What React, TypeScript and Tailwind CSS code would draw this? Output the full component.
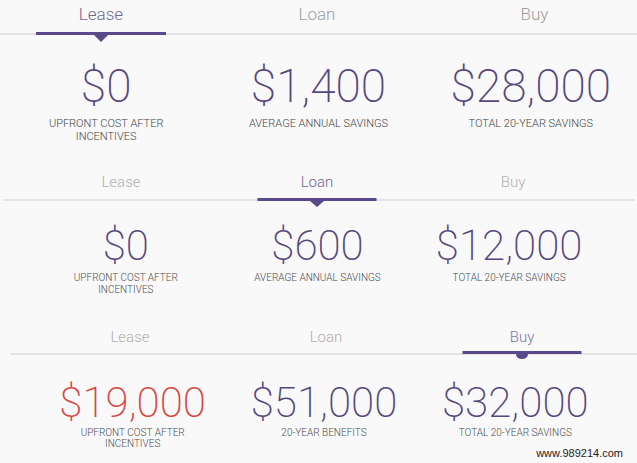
type TabName = "Lease" | "Loan" | "Buy";

interface Stat {
  value: string;
  lines: string[];
  red?: boolean;
}

const tabs: TabName[] = ["Lease", "Loan", "Buy"];

const leaseStats: Stat[] = [
  { value: "$0", lines: ["UPFRONT COST AFTER", "INCENTIVES"] },
  { value: "$1,400", lines: ["AVERAGE ANNUAL SAVINGS"] },
  { value: "$28,000", lines: ["TOTAL 20-YEAR SAVINGS"] },
];

const loanStats: Stat[] = [
  { value: "$0", lines: ["UPFRONT COST AFTER", "INCENTIVES"] },
  { value: "$600", lines: ["AVERAGE ANNUAL SAVINGS"] },
  { value: "$12,000", lines: ["TOTAL 20-YEAR SAVINGS"] },
];

const buyStats: Stat[] = [
  { value: "$19,000", lines: ["UPFRONT COST AFTER", "INCENTIVES"], red: true },
  { value: "$51,000", lines: ["20-YEAR BENEFITS"] },
  { value: "$32,000", lines: ["TOTAL 20-YEAR SAVINGS"] },
];

const App = () => {
  return (
    <main
      className="relative w-[637px] h-[463px] overflow-hidden bg-[#f9f9f9]"
      style={{ fontFamily: "Roboto, 'Liberation Sans', sans-serif" }}
    >
      {/* first card: lease selected */}
      <section className="h-[160px]">
        <div className="grid grid-cols-[202px_230px_1fr] border-b-2 border-[#e3e3e3]">
          {tabs.map((t) => (
            <div key={t} className="relative h-[33px] pt-[4px] text-center text-[17px] leading-[20px] font-light">
              <span className={t === "Lease" ? "text-[#6f6693]" : "text-[#9d9d9d]"}>{t}</span>
              {t === "Lease" && (
                <>
                  <div className="absolute left-1/2 -translate-x-1/2 bottom-[-2px] w-[130px] h-[3px] bg-[#5b4a8b]" />
                  <div className="absolute left-1/2 -translate-x-1/2 top-[35px] w-0 h-0 border-x-[7px] border-x-transparent border-t-[7px] border-t-[#5b4a8b]" />
                </>
              )}
            </div>
          ))}
        </div>
        <div className="grid grid-cols-3 mt-[28px]">
          {leaseStats.map((s) => (
            <div key={s.value} className="flex flex-col items-center">
              <div className="text-[46px] leading-none font-extralight text-[#56487f]">{s.value}</div>
              <div className="mt-[8px] text-[11px] leading-[13px] font-light text-[#444] text-center">
                {s.lines.map((l) => (
                  <div key={l}>{l}</div>
                ))}
              </div>
            </div>
          ))}
        </div>
      </section>

      {/* second card: loan selected */}
      <section className="h-[150px] mx-[3px]">
        <div className="grid grid-cols-3 pl-[20px] pr-[23px] border-b-2 border-[#e3e3e3]">
          {tabs.map((t) => (
            <div key={t} className="relative h-[39px] pt-[13px] text-center text-[15px] leading-[18px] font-light">
              <span className={t === "Loan" ? "text-[#6f6693]" : "text-[#b0b0b0]"}>{t}</span>
              {t === "Loan" && (
                <>
                  <div className="absolute left-1/2 -translate-x-1/2 bottom-[-2px] w-[119px] h-[3px] bg-[#5b4a8b]" />
                  <div className="absolute left-1/2 -translate-x-1/2 top-[41px] w-0 h-0 border-x-[7px] border-x-transparent border-t-[6px] border-t-[#5b4a8b]" />
                </>
              )}
            </div>
          ))}
        </div>
        <div className="grid grid-cols-3 pl-[27px] pr-[29px] mt-[24px]">
          {loanStats.map((s) => (
            <div key={s.value} className="flex flex-col items-center">
              <div className="text-[42px] leading-none font-extralight text-[#56487f]">{s.value}</div>
              <div className="mt-[5px] text-[10px] leading-[12px] font-light text-[#4d4d4d] text-center">
                {s.lines.map((l) => (
                  <div key={l}>{l}</div>
                ))}
              </div>
            </div>
          ))}
        </div>
      </section>

      {/* third card: buy selected */}
      <section className="h-[153px] ml-[10px]">
        <div className="grid grid-cols-3 pl-[22px] pr-[17px] border-b-2 border-[#e3e3e3]">
          {tabs.map((t) => (
            <div key={t} className="relative h-[43px] pt-[18px] text-center text-[15px] leading-[18px] font-light">
              <span className={t === "Buy" ? "text-[#7d76a0]" : "text-[#b0b0b0]"}>{t}</span>
              {t === "Buy" && (
                <>
                  <div className="absolute left-1/2 -translate-x-1/2 bottom-[-1px] w-[119px] h-[3px] bg-[#5b4a8b]" />
                  <div className="absolute left-1/2 -translate-x-1/2 top-[44px] w-[12px] h-[5px] rounded-b-full bg-[#5b4a8b]" />
                </>
              )}
            </div>
          ))}
        </div>
        <div className="grid grid-cols-3 pl-[27px] pr-[26px] mt-[27px]">
          {buyStats.map((s) => (
            <div key={s.value} className="flex flex-col items-center">
              <div className={`text-[42px] leading-none font-extralight ${s.red ? "text-[#d8473f]" : "text-[#56487f]"}`}>
                {s.value}
              </div>
              <div className="mt-[3px] text-[10px] leading-[11px] font-light text-[#4d4d4d] text-center">
                {s.lines.map((l) => (
                  <div key={l}>{l}</div>
                ))}
              </div>
            </div>
          ))}
        </div>
      </section>

      <div
        className="absolute right-[14px] bottom-[2px] text-[11px] text-[#222]"
        style={{ fontFamily: "'Liberation Sans', Arial, sans-serif" }}
      >
        www.989214.com
      </div>
    </main>
  );
};

export default App;
